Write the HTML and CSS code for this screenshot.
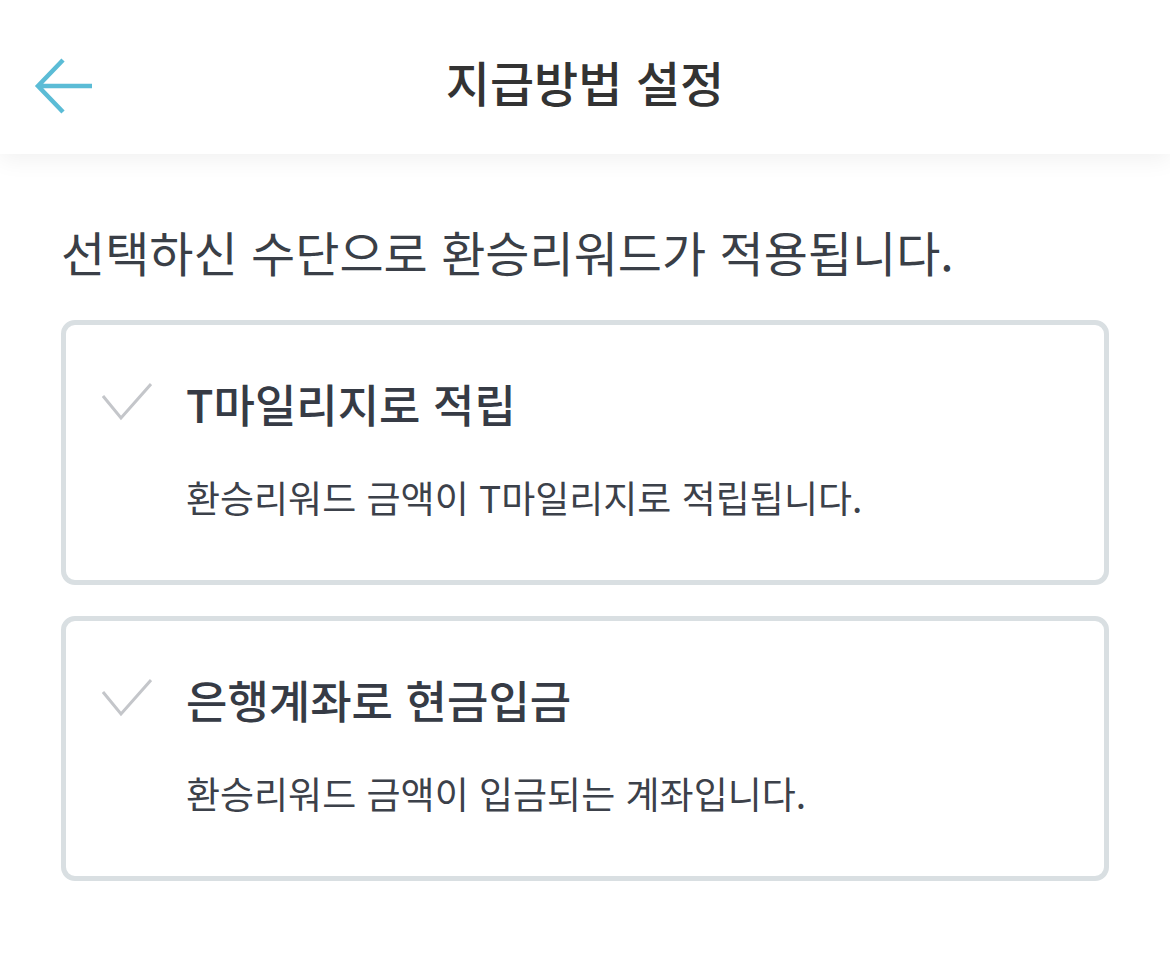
FILE: index.html
```html
<!DOCTYPE html>
<html lang="ko">
<head>
    <meta charset="UTF-8">
    <meta name="viewport" content="width=device-width, initial-scale=1.0">
    <title>지급방법 설정</title>
    <link rel="stylesheet" href="styles.css">
</head>
<body>

    <header class="topbar">
        <button class="back-btn" aria-label="뒤로">
            <svg width="60" height="56" viewBox="0 0 60 56">
                <path d="M29 2 L4 28 L29 54 M4 28 H58" fill="none" stroke="#5bbcd6" stroke-width="4.5"/>
            </svg>
        </button>
        <h1 class="topbar-title">지급방법 설정</h1>
    </header>

    <main class="content">
        <p class="intro">선택하신 수단으로 환승리워드가 적용됩니다.</p>

        <div class="option">
            <svg class="check" width="50" height="38" viewBox="0 0 50 38">
                <path d="M1 13 L19 35 L49 1" fill="none" stroke="#c4c6ca" stroke-width="3"/>
            </svg>
            <div class="option-body">
                <div class="option-title">T마일리지로 적립</div>
                <div class="option-desc">환승리워드 금액이 T마일리지로 적립됩니다.</div>
            </div>
        </div>

        <div class="option">
            <svg class="check" width="50" height="38" viewBox="0 0 50 38">
                <path d="M1 13 L19 35 L49 1" fill="none" stroke="#c4c6ca" stroke-width="3"/>
            </svg>
            <div class="option-body">
                <div class="option-title">은행계좌로 현금입금</div>
                <div class="option-desc">환승리워드 금액이 입금되는 계좌입니다.</div>
            </div>
        </div>
    </main>

</body>
</html>
```

FILE: styles.css
```css
body {
    margin: 0;
    padding: 0;
    background-color: #ffffff;
    font-family: "Noto Sans CJK KR", "Noto Sans", sans-serif;
    color: #3a3f47;
}
.topbar {
    position: relative;
    height: 154px;
    display: flex;
    align-items: center;
    justify-content: center;
    background-color: #ffffff;
    box-shadow: 0 6px 22px rgba(0, 0, 0, 0.06);
}
.back-btn {
    position: absolute;
    left: 34px;
    top: 58px;
    padding: 0;
    border: none;
    background: none;
    cursor: pointer;
}
.back-btn svg {
    display: block;
}
.topbar-title {
    margin: 8px 0 0 0;
    font-size: 48px;
    font-weight: 500;
    line-height: 56px;
    color: #333333;
}
.content {
    padding: 69px 61px 0 61px;
}
.intro {
    margin: 0 0 41px 0;
    font-size: 48px;
    line-height: 56px;
    font-weight: 400;
    color: #3a3f47;
}
.option {
    display: flex;
    align-items: flex-start;
    border: 5px solid #d9dfe2;
    border-radius: 14px;
    padding: 53px 30px 61px 36px;
    margin-bottom: 31px;
    cursor: pointer;
}
.check {
    display: block;
    flex: none;
    margin-top: 5px;
    margin-right: 34px;
}
.option-title {
    font-size: 45px;
    line-height: 52px;
    font-weight: 500;
    color: #363b45;
}
.option-desc {
    margin-top: 45px;
    font-size: 37px;
    line-height: 44px;
    font-weight: 400;
    color: #3c414a;
}
```
